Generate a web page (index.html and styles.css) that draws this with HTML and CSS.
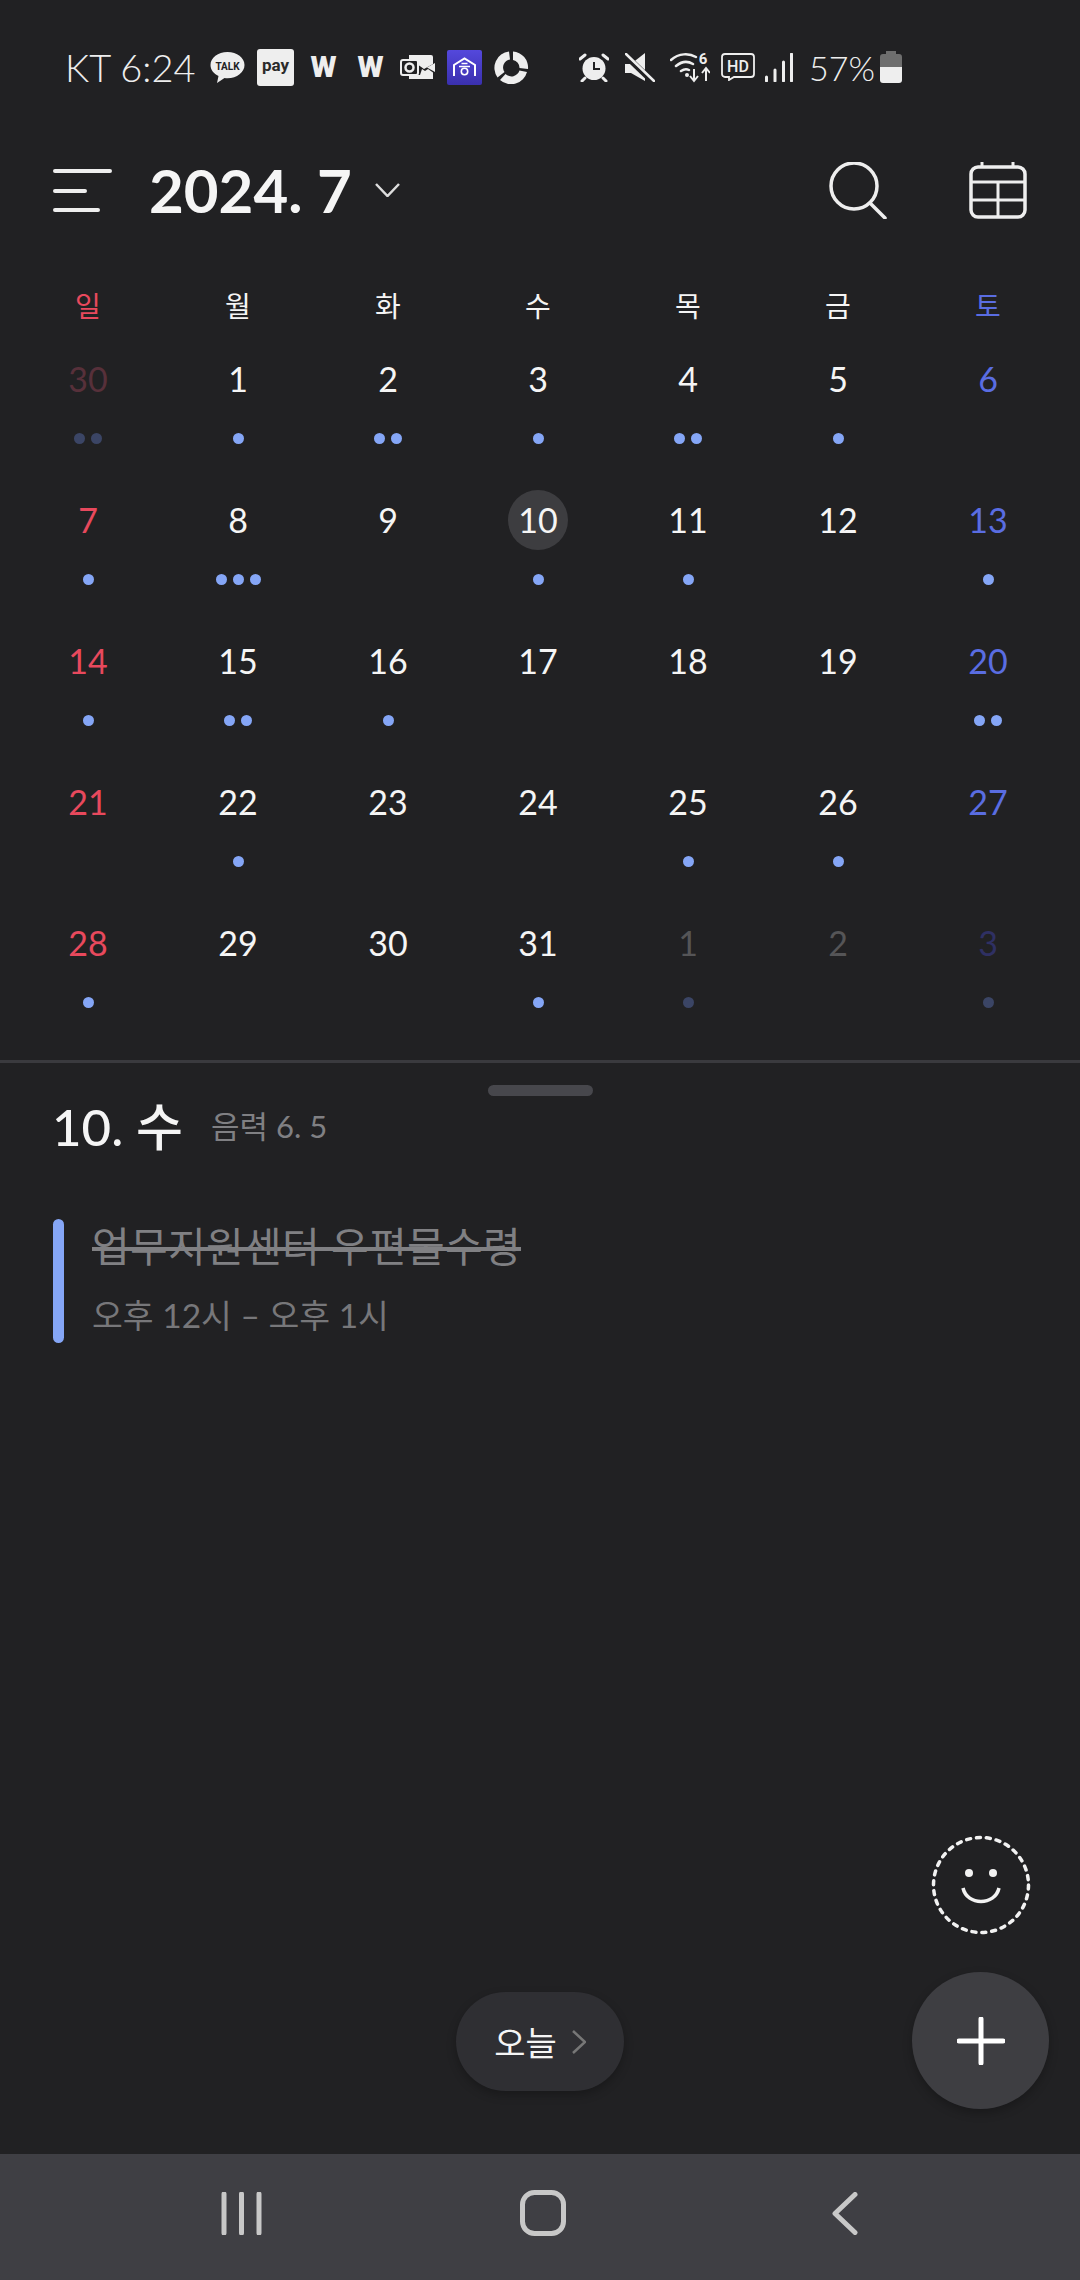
FILE: index.html
```html
<!DOCTYPE html>
<html lang="ko">

<head>
    <meta charset="UTF-8">
    <meta name="viewport" content="width=device-width, initial-scale=1.0">
    <title>Calendar</title>
    <link rel="stylesheet" href="styles.css">
</head>

<body>
    <div class="page">
        <!-- status bar -->
        <div class="status">
            <div class="status-left">
                <span class="clock">KT 6:24</span>
                <svg class="st-talk" viewBox="0 0 35 33">
                    <path d="M17.5 1C8 1 0.5 6.800 0.500 14c0 4.700 3.200 8.800 8 11l-1.500 7 7.500-5c1 .1 2 .2 3 .2 9.500 0 17-6 17-13.200S27 1 17.500 1z" fill="#eeeeee" />
                    <text x="17.500" y="18.500" class="talk-text" text-anchor="middle">TALK</text>
                </svg>
                <span class="pay">pay</span>
                <span class="wlogo">W</span>
                <span class="wlogo">W</span>
                <svg class="st-outlook" viewBox="0 0 35 26">
                    <path d="M9 1h22a2 2 0 0 1 2 2v7l-9 5-7-5H9z" fill="#eeeeee" />
                    <path d="M35 9v9l-8-4.500zM22 15l3 2 3-2 5 3.500V25H9v-4h11z" fill="#eeeeee" />
                    <rect x="1" y="6" width="17" height="15" rx="2" fill="#212123" stroke="#eeeeee" stroke-width="2" />
                    <circle cx="9.500" cy="13.500" r="4" fill="none" stroke="#eeeeee" stroke-width="2.500" />
                </svg>
                <svg class="st-house" viewBox="0 0 35 35">
                    <defs>
                        <linearGradient id="house-bg" x1="0" y1="0" x2="0" y2="1">
                            <stop offset="0" stop-color="#5448dc" />
                            <stop offset="1" stop-color="#3a30ae" />
                        </linearGradient>
                    </defs>
                    <rect width="35" height="35" rx="2" fill="url(#house-bg)" />
                    <path d="M7 26V15l10.500-6.500L28 15v11" fill="none" stroke="#fff" stroke-width="2" />
                    <path d="M14.500 13.500h6M12 16.500h11" stroke="#fff" stroke-width="1.500" />
                    <circle cx="17.500" cy="21.500" r="3.200" fill="none" stroke="#fff" stroke-width="1.600" />
                </svg>
                <svg class="st-pie" viewBox="0 0 35 33">
                    <path d="M19 .5a16 16 0 0 1 15 17.500l-8.500-1a8 8 0 0 0-6.500-8z" fill="#eeeeee" />
                    <path d="M33 21a16.500 16.500 0 0 1-27 8l5.500-6a8.500 8.500 0 0 0 14-3.500z" fill="#eeeeee" />
                    <path d="M3.500 26.500A16.500 16.500 0 0 1 15 .5l1 8a8 8 0 0 0-5.500 12.500z" fill="#eeeeee" />
                </svg>
            </div>
            <div class="status-right">
                <svg class="st-alarm" viewBox="0 0 30 29">
                    <circle cx="15" cy="15.500" r="11.500" fill="#eeeeee" />
                    <path d="M15 9v7h6" fill="none" stroke="#212123" stroke-width="2" />
                    <path d="M1 6l5-4M29 6l-5-4M6 25l-3 3M24 25l3 3" stroke="#eeeeee" stroke-width="3" stroke-linecap="round" />
                </svg>
                <svg class="st-mute" viewBox="0 0 30 29">
                    <path d="M0 11v9h6l14 8V0L6 11z" fill="#eeeeee" />
                    <path d="M1 3l26 25" stroke="#212123" stroke-width="6" />
                    <path d="M1 1l28 27" stroke="#eeeeee" stroke-width="2.500" stroke-linecap="round" />
                </svg>
                <svg class="st-wifi" viewBox="0 -6 40 37">
                    <path d="M1 8c8-7 18-7 25-3M6 14c6-5 12-5 17-2M11 19c3-2 6-2 8-1" fill="none" stroke="#eeeeee" stroke-width="2.500" stroke-linecap="round" />
                    <circle cx="17" cy="23" r="2" fill="#eeeeee" />
                    <path d="M24 17v11M20 24l4 5 4-5M36 29V17M32 21l4-5 4 5" fill="none" stroke="#eeeeee" stroke-width="2" />
                    <text x="33" y="12" class="wifi-text" text-anchor="middle">6</text>
                </svg>
                <svg class="st-hd" viewBox="0 0 34 28">
                    <path d="M4 1h26a3 3 0 0 1 3 3v17a3 3 0 0 1-3 3H13l-5 3v-3H4a3 3 0 0 1-3-3V4a3 3 0 0 1 3-3z" fill="none" stroke="#eeeeee" stroke-width="1.800" />
                    <text x="17" y="18.500" class="hd-text" text-anchor="middle">HD</text>
                </svg>
                <svg class="st-signal" viewBox="0 0 28 29">
                    <path d="M1.500 24v4M10 17v11M18.500 9v19M26.500 1v27" stroke="#eeeeee" stroke-width="3" stroke-linecap="round" />
                </svg>
                <span class="percent">57%</span>
                <svg class="st-battery" viewBox="0 0 22 32">
                    <path d="M6 0h10v3h3a3 3 0 0 1 3 3v10H0V6a3 3 0 0 1 3-3h3z" fill="#6e6e6e" />
                    <path d="M0 16h22v13a3 3 0 0 1-3 3H3a3 3 0 0 1-3-3z" fill="#eeeeee" />
                </svg>
            </div>
        </div>

        <!-- month header -->
        <div class="header">
            <svg class="menu-icon" viewBox="0 0 59 43">
                <path d="M2 2h55M2 22h30M2 41h43" stroke="#eeeeee" stroke-width="4" stroke-linecap="round" />
            </svg>
            <h1 class="month">2024. 7</h1>
            <svg class="month-arrow" viewBox="0 0 25 14">
                <path d="M1 1l11.500 12L24 1" fill="none" stroke="#dddddd" stroke-width="2.500" />
            </svg>
            <div class="spacer"></div>
            <svg class="search-icon" viewBox="0 0 58 57">
                <circle cx="25" cy="24" r="23" fill="none" stroke="#eeeeee" stroke-width="3.500" />
                <path d="M41 41l15 15" stroke="#eeeeee" stroke-width="3.500" stroke-linecap="round" />
            </svg>
            <svg class="cal-icon" viewBox="0 0 58 58">
                <rect x="2" y="6" width="54" height="50" rx="7" fill="none" stroke="#eeeeee" stroke-width="3.500" />
                <path d="M13 1v5M44 1v5M2 21h54M2 39h54M29 21v35" stroke="#eeeeee" stroke-width="3" />
            </svg>
        </div>

        <!-- weekday names -->
        <div class="weekdays">
            <div class="sun">일</div>
            <div>월</div>
            <div>화</div>
            <div>수</div>
            <div>목</div>
            <div>금</div>
            <div class="sat">토</div>
        </div>

        <!-- month grid -->
        <div class="grid">
            <div class="day"><span class="num dim-sun">30</span><div class="dots"><i class="dot dim"></i><i class="dot dim"></i></div></div>
            <div class="day"><span class="num">1</span><div class="dots"><i class="dot"></i></div></div>
            <div class="day"><span class="num">2</span><div class="dots"><i class="dot"></i><i class="dot"></i></div></div>
            <div class="day"><span class="num">3</span><div class="dots"><i class="dot"></i></div></div>
            <div class="day"><span class="num">4</span><div class="dots"><i class="dot"></i><i class="dot"></i></div></div>
            <div class="day"><span class="num">5</span><div class="dots"><i class="dot"></i></div></div>
            <div class="day"><span class="num sat">6</span><div class="dots"></div></div>

            <div class="day"><span class="num sun">7</span><div class="dots"><i class="dot"></i></div></div>
            <div class="day"><span class="num">8</span><div class="dots"><i class="dot"></i><i class="dot"></i><i class="dot"></i></div></div>
            <div class="day"><span class="num">9</span><div class="dots"></div></div>
            <div class="day"><span class="num today">10</span><div class="dots"><i class="dot"></i></div></div>
            <div class="day"><span class="num">11</span><div class="dots"><i class="dot"></i></div></div>
            <div class="day"><span class="num">12</span><div class="dots"></div></div>
            <div class="day"><span class="num sat">13</span><div class="dots"><i class="dot"></i></div></div>

            <div class="day"><span class="num sun">14</span><div class="dots"><i class="dot"></i></div></div>
            <div class="day"><span class="num">15</span><div class="dots"><i class="dot"></i><i class="dot"></i></div></div>
            <div class="day"><span class="num">16</span><div class="dots"><i class="dot"></i></div></div>
            <div class="day"><span class="num">17</span><div class="dots"></div></div>
            <div class="day"><span class="num">18</span><div class="dots"></div></div>
            <div class="day"><span class="num">19</span><div class="dots"></div></div>
            <div class="day"><span class="num sat">20</span><div class="dots"><i class="dot"></i><i class="dot"></i></div></div>

            <div class="day"><span class="num sun">21</span><div class="dots"></div></div>
            <div class="day"><span class="num">22</span><div class="dots"><i class="dot"></i></div></div>
            <div class="day"><span class="num">23</span><div class="dots"></div></div>
            <div class="day"><span class="num">24</span><div class="dots"></div></div>
            <div class="day"><span class="num">25</span><div class="dots"><i class="dot"></i></div></div>
            <div class="day"><span class="num">26</span><div class="dots"><i class="dot"></i></div></div>
            <div class="day"><span class="num sat">27</span><div class="dots"></div></div>

            <div class="day"><span class="num sun">28</span><div class="dots"><i class="dot"></i></div></div>
            <div class="day"><span class="num">29</span><div class="dots"></div></div>
            <div class="day"><span class="num">30</span><div class="dots"></div></div>
            <div class="day"><span class="num">31</span><div class="dots"><i class="dot"></i></div></div>
            <div class="day"><span class="num dim-day">1</span><div class="dots"><i class="dot dim"></i></div></div>
            <div class="day"><span class="num dim-day">2</span><div class="dots"></div></div>
            <div class="day"><span class="num dim-sat">3</span><div class="dots"><i class="dot dim"></i></div></div>
        </div>

        <!-- selected day -->
        <div class="sheet">
            <div class="handle"></div>
            <div class="date-row">
                <span class="date">10. 수</span>
                <span class="lunar">음력 6. 5</span>
            </div>
            <div class="event">
                <div class="event-bar"></div>
                <div class="event-text">
                    <div class="event-title">업무지원센터 우편물수령</div>
                    <div class="event-time">오후 12시 – 오후 1시</div>
                </div>
            </div>
        </div>

        <!-- bottom navigation -->
        <div class="nav">
            <svg class="nav-recent" viewBox="0 0 41 43">
                <path d="M3 2v39M20.500 2v39M38 2v39" stroke="#c8c8c8" stroke-width="5" stroke-linecap="round" />
            </svg>
            <svg class="nav-home" viewBox="0 0 46 46">
                <rect x="2.500" y="2.500" width="41" height="41" rx="12" fill="none" stroke="#c8c8c8" stroke-width="5" />
            </svg>
            <svg class="nav-back" viewBox="0 0 26 43">
                <path d="M23 2.500L3 21.500l20 19" fill="none" stroke="#c8c8c8" stroke-width="5" stroke-linecap="round" stroke-linejoin="round" />
            </svg>
        </div>

        <!-- floating buttons -->
        <div class="today-btn">
            <span>오늘</span>
            <svg class="today-arrow" viewBox="0 0 14 24">
                <path d="M1 1l12 11L1 23" fill="none" stroke="#777777" stroke-width="2.500" />
            </svg>
        </div>
        <svg class="smiley" viewBox="0 0 100 100">
            <circle cx="50" cy="50" r="47.500" fill="none" stroke="#f2f2f2" stroke-width="3.500" stroke-dasharray="4 5.950" stroke-linecap="round" />
            <circle cx="38" cy="38" r="4" fill="#f2f2f2" />
            <circle cx="62" cy="38" r="4" fill="#f2f2f2" />
            <path d="M32 53c4 18 32 18 36 0" fill="none" stroke="#f2f2f2" stroke-width="3.500" />
        </svg>
        <div class="fab">
            <svg class="fab-plus" viewBox="0 0 48 48">
                <path d="M24 2v44M2 24h44" stroke="#ffffff" stroke-width="5" stroke-linecap="round" />
            </svg>
        </div>
    </div>
</body>

</html>
```

FILE: styles.css
```css
* {
    box-sizing: border-box;
}

body {
    margin: 0;
    background: #212123;
    font-family: Lato, "Noto Sans CJK KR", sans-serif;
    color: #f5f5f5;
}

.page {
    position: relative;
    width: 1080px;
    height: 2280px;
    display: flex;
    flex-direction: column;
    overflow: hidden;
}

/* status bar */
.status {
    height: 134px;
    flex-shrink: 0;
    display: flex;
    align-items: center;
    justify-content: space-between;
    padding: 0 178px 0 65px;
}

.status-left,
.status-right {
    display: flex;
    align-items: center;
}

.status-left {
    gap: 12px;
}

.clock {
    width: 133px;
    font-size: 38px;
    font-weight: 300;
    white-space: nowrap;
    color: #eeeeee;
}

.st-talk {
    width: 35px;
    height: 33px;
}

.talk-text {
    font-family: Roboto, sans-serif;
    font-size: 10px;
    font-weight: 700;
    fill: #212123;
}

.pay {
    width: 37px;
    height: 37px;
    border-radius: 3px;
    background: #eeeeee;
    color: #2a2a2a;
    font-family: Roboto, sans-serif;
    font-size: 17px;
    font-weight: 700;
    line-height: 32px;
    text-align: center;
}

.wlogo {
    width: 35px;
    text-align: center;
    font-family: Roboto, sans-serif;
    font-size: 30px;
    font-weight: 900;
    line-height: 30px;
    color: #eeeeee;
}

.st-outlook {
    width: 35px;
    height: 26px;
}

.st-house {
    width: 35px;
    height: 35px;
}

.st-pie {
    width: 35px;
    height: 33px;
}

.st-alarm,
.st-mute {
    width: 30px;
    height: 29px;
}

.st-mute {
    margin-left: 16px;
}

.st-wifi {
    width: 40px;
    height: 37px;
    margin: -6px 0 0 15px;
}

.wifi-text {
    font-family: Roboto, sans-serif;
    font-size: 15px;
    font-weight: 700;
    fill: #eeeeee;
}

.st-hd {
    width: 34px;
    height: 28px;
    margin-left: 11px;
}

.hd-text {
    font-family: Roboto, sans-serif;
    font-size: 16px;
    font-weight: 500;
    fill: #eeeeee;
}

.st-signal {
    width: 28px;
    height: 29px;
    margin-left: 10px;
}

.percent {
    margin-left: 16px;
    font-size: 34px;
    font-weight: 300;
    white-space: nowrap;
    color: #eeeeee;
}

.st-battery {
    width: 22px;
    height: 32px;
    margin-left: 5px;
}

/* header */
.header {
    height: 112px;
    flex-shrink: 0;
    display: flex;
    align-items: center;
    padding: 0 53px;
}

.menu-icon {
    width: 59px;
    height: 43px;
}

.month {
    margin: 0 0 0 37px;
    font-size: 60px;
    font-weight: 700;
    white-space: nowrap;
}

.month-arrow {
    width: 25px;
    height: 14px;
    margin-left: 23px;
}

.spacer {
    flex: 1;
}

.search-icon {
    width: 58px;
    height: 57px;
}

.cal-icon {
    width: 58px;
    height: 58px;
    margin-left: 82px;
}

/* calendar */
.weekdays,
.grid {
    display: grid;
    grid-template-columns: repeat(7, 150px);
    padding: 0 17px 0 13px;
    text-align: center;
}

.weekdays {
    height: 50px;
    margin-top: 35px;
    flex-shrink: 0;
    line-height: 50px;
    font-size: 28px;
}

.grid {
    margin-top: 18px;
    grid-auto-rows: 141px;
    flex-shrink: 0;
}

.day {
    display: flex;
    flex-direction: column;
    align-items: center;
}

.num {
    width: 60px;
    height: 60px;
    border-radius: 50%;
    display: flex;
    align-items: center;
    justify-content: center;
    font-size: 34px;
    line-height: 56px;
}

.today {
    background: #3d3d40;
}

.sun {
    color: #e8495d;
}

.sat {
    color: #5a6de2;
}

.dim-sun {
    color: #57303a;
}

.dim-day {
    color: #555557;
}

.dim-sat {
    color: #2f3063;
}

.dots {
    height: 11px;
    margin-top: 24px;
    display: flex;
    gap: 6px;
}

.dot {
    width: 11px;
    height: 11px;
    border-radius: 50%;
    background: #85a6f6;
}

.dot.dim {
    background: #3b4565;
}

/* day detail */
.sheet {
    flex: 1;
    margin-top: 6px;
    border-top: 3px solid #3a3a3e;
}

.handle {
    width: 105px;
    height: 11px;
    margin: 22px auto 0;
    border-radius: 6px;
    background: #47474c;
}

.date-row {
    height: 56px;
    padding-left: 52px;
    display: flex;
    align-items: center;
}

.date {
    font-size: 51px;
    font-weight: 500;
    white-space: nowrap;
}

.lunar {
    margin-left: 28px;
    font-size: 31px;
    color: #808083;
}

.event {
    display: flex;
    margin: 67px 0 0 53px;
}

.event-bar {
    width: 11px;
    height: 124px;
    border-radius: 6px;
    background: #85a6f6;
}

.event-text {
    margin-left: 28px;
}

.event-title {
    height: 56px;
    line-height: 56px;
    font-size: 41px;
    letter-spacing: 0.3px;
    color: #808083;
    text-decoration: line-through;
    white-space: nowrap;
}

.event-time {
    height: 48px;
    margin-top: 16px;
    line-height: 48px;
    font-size: 33.500px;
    color: #77777a;
    white-space: nowrap;
}

/* navigation bar */
.nav {
    height: 126px;
    flex-shrink: 0;
    display: grid;
    grid-template-columns: repeat(3, 302px);
    justify-items: center;
    align-items: center;
    padding: 0 0 8px 90px;
    background: #3f3f44;
}

.nav-recent {
    width: 41px;
    height: 43px;
}

.nav-home {
    width: 46px;
    height: 46px;
}

.nav-back {
    width: 26px;
    height: 43px;
}

/* floating items */
.today-btn {
    position: absolute;
    left: 456px;
    top: 1992px;
    width: 168px;
    height: 99px;
    border-radius: 50px;
    background: #2f2f33;
    box-shadow: 0 4px 10px rgba(0, 0, 0, 0.25);
    display: flex;
    align-items: center;
    justify-content: center;
    gap: 15px;
    font-size: 34px;
}

.today-arrow {
    width: 14px;
    height: 24px;
}

.smiley {
    position: absolute;
    left: 931px;
    top: 1835px;
    width: 100px;
    height: 100px;
}

.fab {
    position: absolute;
    left: 912px;
    top: 1972px;
    width: 137px;
    height: 137px;
    border-radius: 50%;
    background: #3e3e42;
    box-shadow: 0 4px 10px rgba(0, 0, 0, 0.25);
    display: flex;
    align-items: center;
    justify-content: center;
}

.fab-plus {
    width: 48px;
    height: 48px;
}
```
